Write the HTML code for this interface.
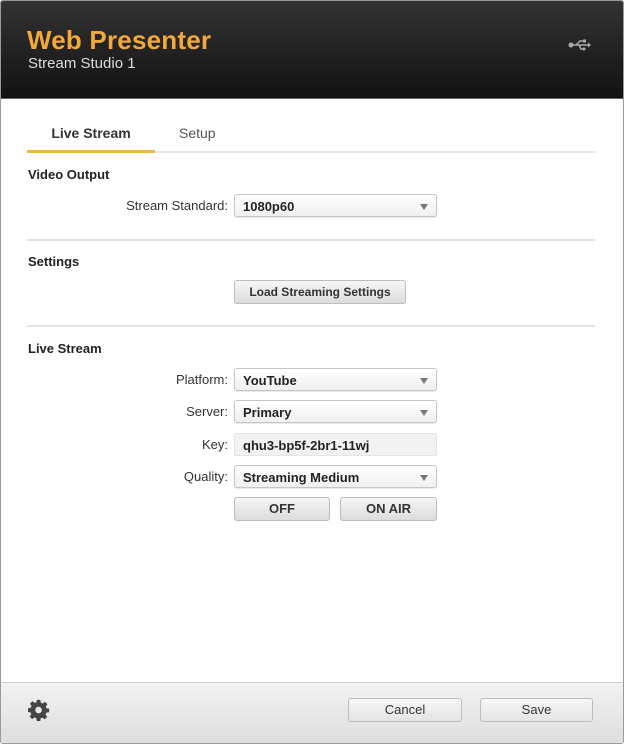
<!DOCTYPE html>
<html><head><meta charset="utf-8"><style>
*{margin:0;padding:0;box-sizing:border-box}
body{width:625px;height:746px;background:#fff;font-family:"Liberation Sans",sans-serif;position:relative;overflow:hidden}
.frame{position:absolute;left:0;top:0;width:624px;height:744px;border:1px solid #9a9a9a;border-radius:3px;overflow:hidden;background:#fff}
.hdr{position:absolute;left:0;top:0;width:100%;height:98px;background:linear-gradient(#333,#121212);border-bottom:1px solid #666}
.a{position:absolute}
.t{color:#f2a93b;font-size:26px;font-weight:bold;left:26px;top:24px;letter-spacing:0.2px}
.st{color:#ddd;font-size:15px;left:27px;top:54px}
.b{font-weight:bold;font-size:13px;color:#222}
.lbl{font-size:13px;color:#333;text-align:right;width:200px}
.sel{height:23px;border:1px solid #c6c6c6;border-radius:3px;background:linear-gradient(#fff,#f0f0f0);font-size:13px;color:#222;font-weight:bold;padding:4px 8px;box-shadow:0 1px 1px rgba(0,0,0,.1)}
.sel:after{content:"";position:absolute;right:8px;top:9px;border-left:4px solid transparent;border-right:4px solid transparent;border-top:6px solid #777}
.inp{height:23px;background:#f2f2f2;border:1px solid #e4e4e4;border-radius:2px;font-size:13px;color:#222;font-weight:bold;padding:4px 8px}
.btn{height:24px;border:1px solid #bdbdbd;border-radius:3px;background:linear-gradient(#f6f6f6,#dcdcdc);font-size:13px;font-weight:bold;color:#333;text-align:center;line-height:22px}
.sep{height:2px;background:#e3e3e3;left:26px;width:568px}
.ft{position:absolute;left:0;top:681px;width:100%;height:62px;border-top:1px solid #cfcfcf;background:linear-gradient(#f2f2f2,#dedede)}
.fb{height:24px;border:1px solid #bdbdbd;border-radius:3px;background:linear-gradient(#f7f7f7,#e4e4e4);font-size:13px;color:#333;text-align:center;line-height:22px}
</style></head><body><div class="frame">
<div class="hdr">
<div class="a t">Web Presenter</div>
<div class="a st">Stream Studio 1</div>
<svg class="a" style="left:567px;top:37px" width="24" height="14" viewBox="0 0 24 14"><circle cx="3" cy="7" r="2.5" fill="#aaa"/><path d="M3 7H21M8 7L12 3H15M11 7L13 11H15" stroke="#aaa" stroke-width="1.5" fill="none"/><path d="M20 4.5L23 7L20 9.5Z" fill="#aaa"/><rect x="15" y="1.5" width="3" height="3" fill="#aaa"/><circle cx="16" cy="11" r="1.5" fill="#aaa"/></svg>
</div>
<div class="a" style="left:26px;top:124px;width:128px;text-align:center;font-size:14px;font-weight:bold;color:#333">Live Stream</div>
<div class="a" style="left:178px;top:124px;font-size:14px;color:#555">Setup</div>
<div class="a" style="left:26px;top:150px;width:568px;height:2px;background:#e6e6e6"></div>
<div class="a" style="left:26px;top:149px;width:128px;height:3px;background:#f1b73d"></div>

<div class="a b" style="left:27px;top:166px">Video Output</div>
<div class="a lbl" style="left:27px;top:197px">Stream Standard:</div>
<div class="a sel" style="left:233px;top:193px;width:203px">1080p60</div>
<div class="a sep" style="top:238px"></div>

<div class="a b" style="left:27px;top:253px">Settings</div>
<div class="a btn" style="left:233px;top:279px;width:172px;font-size:12px">Load Streaming Settings</div>
<div class="a sep" style="top:324px"></div>

<div class="a b" style="left:27px;top:340px">Live Stream</div>
<div class="a lbl" style="left:27px;top:371px">Platform:</div>
<div class="a sel" style="left:233px;top:367px;width:203px">YouTube</div>
<div class="a lbl" style="left:27px;top:403px">Server:</div>
<div class="a sel" style="left:233px;top:399px;width:203px">Primary</div>
<div class="a lbl" style="left:27px;top:436px">Key:</div>
<div class="a inp" style="left:233px;top:432px;width:203px">qhu3-bp5f-2br1-11wj</div>
<div class="a lbl" style="left:27px;top:468px">Quality:</div>
<div class="a sel" style="left:233px;top:464px;width:203px">Streaming Medium</div>
<div class="a btn" style="left:233px;top:496px;width:96px">OFF</div>
<div class="a btn" style="left:339px;top:496px;width:97px">ON AIR</div>

<div class="ft">
<svg class="a" style="left:27px;top:16px" width="22" height="22" viewBox="0 0 24 24"><path fill="#444" d="M10 1h4l.6 3.2 2 .9 2.7-1.9 2.8 2.8-1.9 2.7.9 2L24 11v4l-3.2.6-.9 2 1.9 2.7-2.8 2.8-2.7-1.9-2 .9L14 25h-4l-.6-3.2-2-.9-2.7 1.9-2.8-2.8 1.9-2.7-.9-2L0 14.6v-4l3.2-.6.9-2L2.2 5.3 5 2.5l2.7 1.9 2-.9z" transform="scale(.96)"/><circle cx="11.5" cy="12" r="3.6" fill="#e8e8e8"/></svg>
<div class="a fb" style="left:347px;top:15px;width:114px">Cancel</div>
<div class="a fb" style="left:479px;top:15px;width:113px">Save</div>
</div>
</div></body></html>
